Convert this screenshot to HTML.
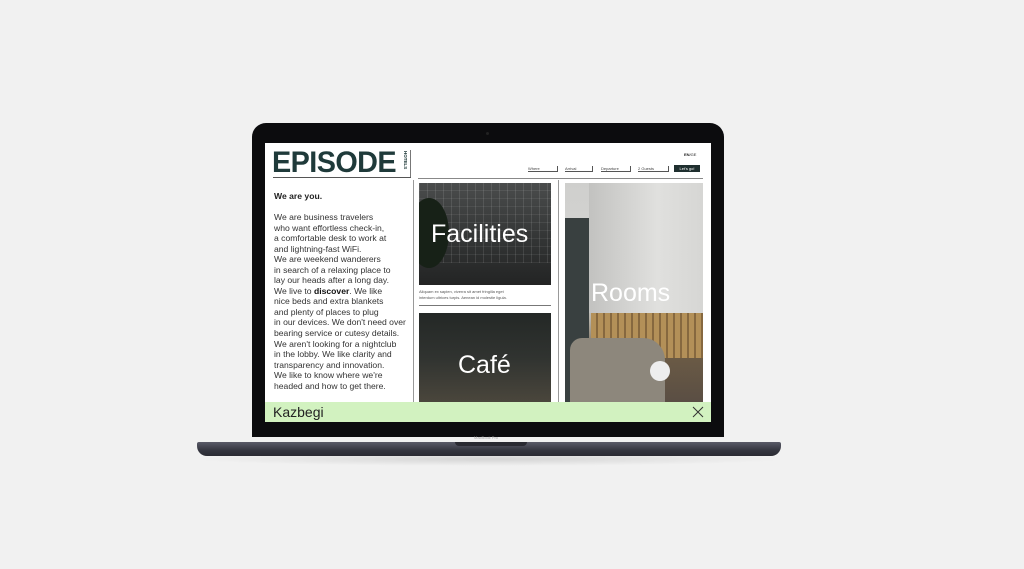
<!DOCTYPE html>
<html><head><style>
*{margin:0;padding:0;box-sizing:border-box}
body{width:1024px;height:569px;background:#f1f1f1;position:relative;overflow:hidden;font-family:"Liberation Sans",sans-serif}
.a{position:absolute}
.txt{font-size:8.6px;line-height:10.6px;color:#333}
.nav{font-size:4px;color:#444;border-bottom:0.8px solid #555;border-right:0.8px solid #555;height:6px}
</style></head><body>
<div class="a" style="left:190px;top:452px;width:600px;height:14px;background:radial-gradient(ellipse at center,rgba(0,0,0,.12),rgba(0,0,0,0) 70%)"></div>
<div class="a" style="left:252px;top:123px;width:472px;height:314px;background:#0c0c0e;border-radius:14px 14px 0 0"></div>
<div class="a" style="left:486px;top:132px;width:3px;height:3px;background:#222;border-radius:50%"></div>
<div class="a" style="left:265px;top:143px;width:446px;height:259px;background:#fff"></div>
<!-- logo -->
<div class="a" style="left:272px;top:146px;font-size:30px;font-weight:bold;color:#1f3a3a;letter-spacing:-0.6px;transform:scaleX(0.96);transform-origin:left">EPISODE</div>
<div class="a" style="left:401px;top:151px;width:8px;height:23px;font-size:4.5px;font-weight:bold;color:#1f3a3a;writing-mode:vertical-rl;line-height:8px">HOTELS</div>
<div class="a" style="left:410px;top:150px;width:1px;height:28px;background:#777"></div>
<div class="a" style="left:273px;top:177px;width:138px;height:1px;background:#555"></div>
<div class="a" style="left:418px;top:178px;width:285px;height:1px;background:#888"></div>
<div class="a" style="left:684px;top:152px;font-size:4px;color:#222;font-weight:bold">EN<span style="font-weight:normal">/GE</span></div>
<div class="a nav" style="left:528px;top:166px;width:30px">Where</div>
<div class="a nav" style="left:565px;top:166px;width:28px">Arrival</div>
<div class="a nav" style="left:601px;top:166px;width:30px">Departure</div>
<div class="a nav" style="left:638px;top:166px;width:31px">2 Guests</div>
<div class="a" style="left:674px;top:165px;width:26px;height:7px;background:#1f2f2f;color:#fff;font-size:4px;text-align:center;line-height:7px">Let's go!</div>
<!-- left text -->
<div class="a txt" style="left:274px;top:191px;font-weight:bold;color:#222">We are you.</div>
<div class="a txt" style="left:274px;top:212px;line-height:10.55px">We are business travelers<br>who want effortless check-in,<br>a comfortable desk to work at<br>and lightning-fast WiFi.<br>We are weekend wanderers<br>in search of a relaxing place to<br>lay our heads after a long day.<br>We live to <b style="color:#111">discover</b>. We like<br>nice beds and extra blankets<br>and plenty of places to plug<br>in our devices. We don't need over<br>bearing service or cutesy details.<br>We aren't looking for a nightclub<br>in the lobby. We like clarity and<br>transparency and innovation.<br>We like to know where we're<br>headed and how to get there.</div>
<div class="a" style="left:413px;top:180px;width:1px;height:222px;background:#999"></div>
<div class="a" style="left:558px;top:180px;width:1px;height:222px;background:#999"></div>
<!-- images -->
<div class="a" style="left:419px;top:183px;width:132px;height:102px;background:linear-gradient(180deg,#4a4c4c 0%,#333535 55%,#232424 100%);overflow:hidden">
<div class="a" style="left:0;top:0;width:132px;height:80px;background:repeating-linear-gradient(90deg,rgba(255,255,255,.10) 0 1px,transparent 1px 8px),repeating-linear-gradient(0deg,rgba(255,255,255,.07) 0 1px,transparent 1px 8px)"></div>
<div class="a" style="left:-10px;top:15px;width:40px;height:70px;background:#172117;border-radius:50%"></div>
</div>
<div class="a" style="left:431px;top:220px;font-size:25px;color:#fff">Facilities</div>
<div class="a" style="left:419px;top:289px;font-size:4px;line-height:5.5px;color:#555">Aliquam ex sapien, viverra sit amet fringilla eget<br>interdum ultrices turpis. Aenean id molestie ligula.</div>
<div class="a" style="left:419px;top:305px;width:132px;height:1px;background:#777"></div>
<div class="a" style="left:419px;top:313px;width:132px;height:89px;background:linear-gradient(180deg,#242826,#303330 50%,#4a463c)"></div>
<div class="a" style="left:458px;top:351px;font-size:25px;color:#fff">Café</div>
<div class="a" style="left:565px;top:183px;width:138px;height:219px;background:linear-gradient(180deg,#cfcfcd 0%,#d8d8d6 50%,#b8b4ac 62%,#6a5a45 80%,#5a4e44 100%);overflow:hidden">
<div class="a" style="left:0;top:35px;width:24px;height:184px;background:#394040"></div>
<div class="a" style="left:24px;top:0;width:114px;height:130px;background:linear-gradient(90deg,#c2c2c0,#e0e0de 60%,#d6d6d4)"></div>
<div class="a" style="left:26px;top:130px;width:112px;height:45px;background:repeating-linear-gradient(90deg,#b39058 0 5px,#86683f 5px 7px)"></div>
<div class="a" style="left:5px;top:155px;width:95px;height:64px;background:#8d877c;border-radius:12px 22px 0 0"></div>
<div class="a" style="left:85px;top:178px;width:20px;height:20px;background:#eee;border-radius:50%"></div>
</div>
<div class="a" style="left:591px;top:279px;font-size:25px;color:#fff">Rooms</div>
<!-- green bar -->
<div class="a" style="left:265px;top:402px;width:446px;height:20px;background:#d2f2c0"></div>
<div class="a" style="left:273px;top:404px;font-size:14px;color:#222">Kazbegi</div>
<svg class="a" style="left:692px;top:406px" width="12" height="12"><path d="M1 1L11 11M11 1L1 11" stroke="#333" stroke-width="1"/></svg>
<div class="a" style="left:474px;top:435px;font-size:4px;color:#aaa">MacBook Pro</div>
<!-- base -->
<div class="a" style="left:197px;top:442px;width:584px;height:14px;background:linear-gradient(180deg,#5a5b68,#34353f 60%,#2a2a32);border-radius:2px 2px 10px 10px"></div>
<div class="a" style="left:455px;top:442px;width:72px;height:4px;background:#2a2a32;border-radius:0 0 5px 5px"></div>
</body></html>
